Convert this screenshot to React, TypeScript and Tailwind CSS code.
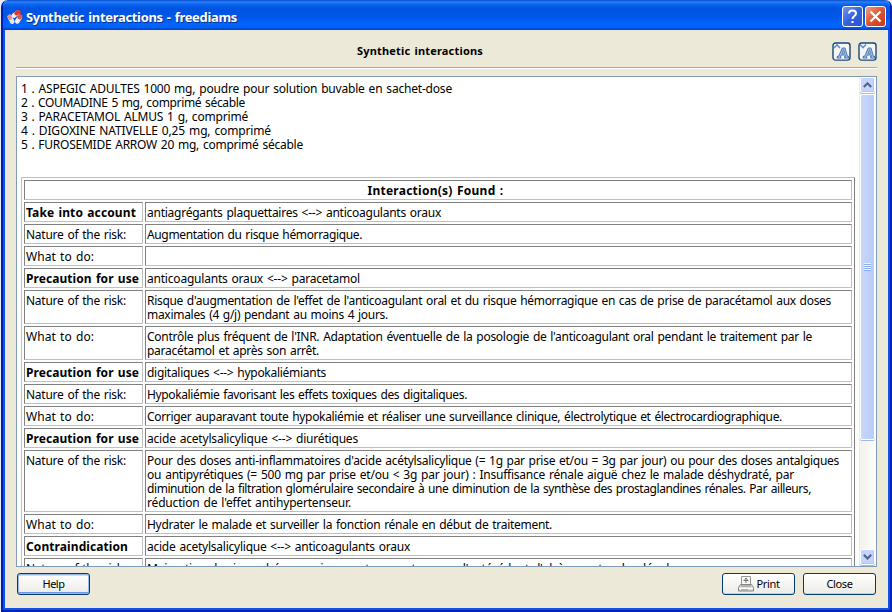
import { useLayoutEffect, useRef, useState } from "react";
import type { ReactNode } from "react";

/* Spreads a single line of text to a given width through letter spacing. */
function Line({ w, children, className = "" }: { w: number; children: string; className?: string }) {
  const ref = useRef<HTMLSpanElement>(null);
  const [spacing, setSpacing] = useState(0);
  useLayoutEffect(() => {
    const el = ref.current;
    if (!el) return;
    const natural = el.getBoundingClientRect().width - spacing * children.length;
    setSpacing((w - natural) / children.length);
  }, [w, children]);
  return (
    <span
      ref={ref}
      className={`block w-max whitespace-pre [word-spacing:1px] ${className}`}
      style={{ letterSpacing: `${spacing}px` }}
    >
      {children}
    </span>
  );
}

type Txt = [string, number];

const drugs: Txt[] = [
  ["1 . ASPEGIC ADULTES 1000 mg, poudre pour solution buvable en sachet-dose", 431],
  ["2 . COUMADINE 5 mg, comprimé sécable", 224],
  ["3 . PARACETAMOL ALMUS 1 g, comprimé", 227],
  ["4 . DIGOXINE NATIVELLE 0,25 mg, comprimé", 250],
  ["5 . FUROSEMIDE ARROW 20 mg, comprimé sécable", 282],
];

const NATURE: Txt = ["Nature of the risk:", 100];
const TODO: Txt = ["What to do:", 68];
const PRECAUTION: Txt = ["Precaution for use", 113];

const rows: { head?: boolean; label: Txt; lines: Txt[] }[] = [
  { head: true, label: ["Take into account", 110], lines: [["antiagrégants plaquettaires <--> anticoagulants oraux", 294]] },
  { label: NATURE, lines: [["Augmentation du risque hémorragique.", 215]] },
  { label: TODO, lines: [] },
  { head: true, label: PRECAUTION, lines: [["anticoagulants oraux <--> paracetamol", 213]] },
  {
    label: NATURE,
    lines: [
      ["Risque d'augmentation de l'effet de l'anticoagulant oral et du risque hémorragique en cas de prise de paracétamol aux doses", 684],
      ["maximales (4 g/j) pendant au moins 4 jours.", 241],
    ],
  },
  {
    label: TODO,
    lines: [
      ["Contrôle plus fréquent de l'INR. Adaptation éventuelle de la posologie de l'anticoagulant oral pendant le traitement par le", 665],
      ["paracétamol et après son arrêt.", 172],
    ],
  },
  { head: true, label: PRECAUTION, lines: [["digitaliques <--> hypokaliémiants", 179]] },
  { label: NATURE, lines: [["Hypokaliémie favorisant les effets toxiques des digitaliques.", 320]] },
  { label: TODO, lines: [["Corriger auparavant toute hypokaliémie et réaliser une surveillance clinique, électrolytique et électrocardiographique.", 635]] },
  { head: true, label: PRECAUTION, lines: [["acide acetylsalicylique <--> diurétiques", 211]] },
  {
    label: NATURE,
    lines: [
      ["Pour des doses anti-inflammatoires d'acide acétylsalicylique (= 1g par prise et/ou = 3g par jour) ou pour des doses antalgiques", 692],
      ["ou antipyrétiques (= 500 mg par prise et/ou < 3g par jour) : Insuffisance rénale aiguë chez le malade déshydraté, par", 647],
      ["diminution de la filtration glomérulaire secondaire à une diminution de la synthèse des prostaglandines rénales. Par ailleurs,", 664],
      ["réduction de l'effet antihypertenseur.", 204],
    ],
  },
  { label: TODO, lines: [["Hydrater le malade et surveiller la fonction rénale en début de traitement.", 405]] },
  { head: true, label: ["Contraindication", 102], lines: [["acide acetylsalicylique <--> anticoagulants oraux", 263]] },
  { label: NATURE, lines: [["Majoration du risque hémorragique, notamment en cas d'antécédent d'ulcère gastro-duodénal.", 525]] },
];

function Cell({ children, className = "" }: { children?: ReactNode; className?: string }) {
  return (
    <div className={`min-h-5 border border-t-[#808080] border-l-[#808080] border-r-[#c0c0c0] border-b-[#c0c0c0] pt-[3px] pb-px pl-px ${className}`}>
      {children}
    </div>
  );
}

function PillIcon() {
  return (
    <svg className="h-4 w-4" viewBox="0 0 16 16">
      <g strokeLinecap="round" fill="none">
        <path d="M2.800 8 5.200 12.600" stroke="#e9e4e6" strokeWidth="4.600" />
        <path d="M2.600 7.600 3.200 8.800" stroke="#e58a80" strokeWidth="4" />
        <path d="M6.800 6.600 10.800 3.600" stroke="#eceef2" strokeWidth="4.600" />
        <path d="M9.600 4.300 11.500 3" stroke="#e2352c" strokeWidth="4.400" />
        <path d="M10.200 12.400 12.800 8.500" stroke="#f4f4f4" strokeWidth="4.600" />
        <path d="M12.600 8.400 13.200 7.300" stroke="#e0574d" strokeWidth="4.200" />
      </g>
    </svg>
  );
}

function FontIcon({ up }: { up?: boolean }) {
  return (
    <svg className="h-[19px] w-[19px]" viewBox="0 0 19 19">
      <rect x="1" y="1" width="17" height="17" rx="2.500" fill="#f5f6f6" stroke="#174777" strokeWidth="1.400" />
      <path d="M2.500 17h14" stroke="#cfd3dc" />
      <path d={up ? "M2 6 5 3l3 3" : "M2 2.500 5 5.500l3-3"} fill="none" stroke="#5f8fc6" strokeWidth="1.600" />
      <path d="M6 15.200h2M7.300 15 10.900 6.800h1.400L14.700 15M13.400 15.200h2.600M9.300 12h4.500" fill="none" stroke="#4f78b0" strokeWidth="2.800" strokeLinejoin="round" strokeLinecap="round" />
      <path d="M6 15.200h2M7.300 15 11 7h1.200L14.700 15M13.400 15.200h2.400M9.300 12h4.500" fill="none" stroke="#9dbce2" strokeWidth="1.100" />
    </svg>
  );
}

function PrinterIcon() {
  return (
    <svg className="h-4 w-4" viewBox="0 0 16 16" fill="none">
      <path d="M3.500 9.500v-9h9v9" fill="#f7f7f5" stroke="#979797" />
      <path d="M8 2v5M5.500 4.500h5M6.500 3.500 8 2l1.500 1.500" stroke="#777" />
      <path d="M2.500 8.500h11l2 3v3.500H.5V11.500z" fill="#deded9" stroke="#858585" />
      <path d="M3 10h10" stroke="#888" />
      <path d="M1 12.500h14" stroke="#fff" />
      <path d="M3 13.500h7" stroke="#aaa" />
    </svg>
  );
}

function Arrow({ down }: { down?: boolean }) {
  return (
    <div className="flex h-4 w-[15px] items-center justify-center rounded-[2px] border border-white bg-[#c5d4fc] shadow-[inset_-1px_-1px_0_#b0c4f5,0_1px_0_#a5b9df]">
      <svg className="h-[6px] w-[9px]" viewBox="0 0 9 6" fill="none">
        <path d={down ? "M.8 .8 4.500 4.500 8.200 .8" : "M.8 5 4.500 1.300 8.200 5"} stroke="#4d6185" strokeWidth="2" />
      </svg>
    </div>
  );
}

function Button({ children, focused }: { children: ReactNode; focused?: boolean }) {
  return (
    <button
      className={`flex h-[22px] w-[73px] items-center justify-center rounded-[3px] border border-[#003c74] bg-linear-to-b from-white to-[#ecebe5] text-[11px] leading-[14px] ${
        focused ? "shadow-[inset_0_0_0_1px_#98b8ea,inset_0_-2px_0_#6f96de,inset_0_2px_0_#cbdcf8]" : "shadow-[inset_0_-1px_0_#d6d0c5]"
      }`}
    >
      {children}
    </button>
  );
}

export default function App() {
  return (
    <div className="h-[612px] w-[892px] overflow-hidden bg-[#e8edf8] pl-px font-['Noto_Sans',sans-serif] text-[12px] leading-[14px] text-black">
      <div className="h-[612px] overflow-hidden rounded-t-[7px] border-x-2 border-b-2 border-[#0020b4]">
        <div className="flex h-[610px] flex-col border-x-2 border-b-2 border-[#0855e8] bg-[#ece9d8]">
          <header className="-mx-0.5 flex h-[30px] shrink-0 items-center bg-[linear-gradient(180deg,#0a4fd0_0%,#2b80f8_7%,#0966f0_14%,#0054e3_28%,#0056e8_55%,#0066ff_80%,#0062f5_90%,#003dcc_100%)] pt-[3px] pr-1 pl-1">
            <PillIcon />
            <h1 className="ml-[3px] grow text-[13px] leading-4 font-bold text-white [text-shadow:1px_1px_0_#0a318f]">
              <Line w={211}>Synthetic interactions - freediams</Line>
            </h1>
            <div className="flex gap-[2px]">
              <div className="flex h-[21px] w-[21px] items-center justify-center rounded-[3px] border border-white bg-linear-to-br from-[#7695ee] via-[#3563df] to-[#2355d6]">
                <svg className="h-[15px] w-[13px]" viewBox="0 0 13 15" fill="none">
                  <path d="M3 4.500C3 2.500 4.500 1.500 6.500 1.500s3.500 1 3.500 3c0 2.500-3.500 2.500-3.500 5.500" stroke="#fff" strokeWidth="2" />
                  <path d="M5.500 12h2v2h-2z" fill="#fff" />
                </svg>
              </div>
              <div className="flex h-[21px] w-[21px] items-center justify-center rounded-[3px] border border-white bg-linear-to-br from-[#ee9a7f] via-[#e0522f] to-[#c93a12]">
                <svg className="h-[13px] w-[13px]" viewBox="0 0 13 13">
                  <path d="m1.500 1.500 10 10m0-10-10 10" stroke="#fff" strokeWidth="2.200" />
                </svg>
              </div>
            </div>
          </header>

          <div className="flex min-h-0 grow flex-col pr-[11px] pl-[11px]">
            <div className="flex h-[38px] shrink-0 items-center border-b border-[#aca899] pt-[5px] shadow-[0_1px_0_#fff]">
              <div className="flex grow justify-center pr-2 text-[11px] font-bold">
                <Line w={126}>Synthetic interactions</Line>
              </div>
              <div className="flex gap-[7px]">
                <FontIcon up />
                <FontIcon />
              </div>
            </div>

            <div className="mt-[8px] flex h-[491px] shrink-0 border border-[#7f9db9] bg-white">
              <div className="h-[489px] grow overflow-hidden pt-[5px] pl-1">
                {drugs.map(([t, w]) => (
                  <Line key={t} w={w}>{t}</Line>
                ))}
                <div className="mt-[25px] flex w-[834px] flex-col gap-[2px] border border-t-[#c0c0c0] border-r-[#808080] border-b-[#808080] border-l-[#c0c0c0] p-[2px]">
                  <Cell className="flex justify-center pr-[6px] font-bold">
                    <Line w={136}>Interaction(s) Found :</Line>
                  </Cell>
                  {rows.map((r, i) => (
                    <div key={i} className="grid grid-cols-[119px_707px] gap-[2px]">
                      <Cell className={r.head ? "font-bold" : ""}>
                        <Line w={r.label[1]}>{r.label[0]}</Line>
                      </Cell>
                      <Cell>
                        {r.lines.map(([t, w]) => (
                          <Line key={t} w={w}>{t}</Line>
                        ))}
                      </Cell>
                    </div>
                  ))}
                </div>
              </div>
              <div className="flex w-[17px] shrink-0 flex-col items-start border-l border-[#eeede5] bg-linear-to-r from-[#f3f1ec] to-[#fefefb]">
                <Arrow />
                <div className="mt-px flex h-[346px] w-[15px] flex-col items-center justify-center gap-px rounded-[2px] border border-white bg-linear-to-r from-[#c9d7fc] to-[#b9cbf8] shadow-[0_1px_0_#a5b9df]">
                  {[0, 1, 2, 3].map((n) => (
                    <div key={n} className="h-px w-[7px] bg-[#8caff5] shadow-[0_-1px_0_#eef4fe]" />
                  ))}
                </div>
                <div className="grow" />
                <Arrow down />
                <div className="h-px" />
              </div>
            </div>

            <footer className="mt-[6px] flex items-start justify-between pr-px pl-px">
              <Button focused>
                <Line w={22}>Help</Line>
              </Button>
              <div className="flex gap-2">
                <Button>
                  <PrinterIcon />
                  <Line w={23} className="ml-[3px]">Print</Line>
                </Button>
                <Button>
                  <Line w={26}>Close</Line>
                </Button>
              </div>
            </footer>
          </div>
        </div>
      </div>
    </div>
  );
}
